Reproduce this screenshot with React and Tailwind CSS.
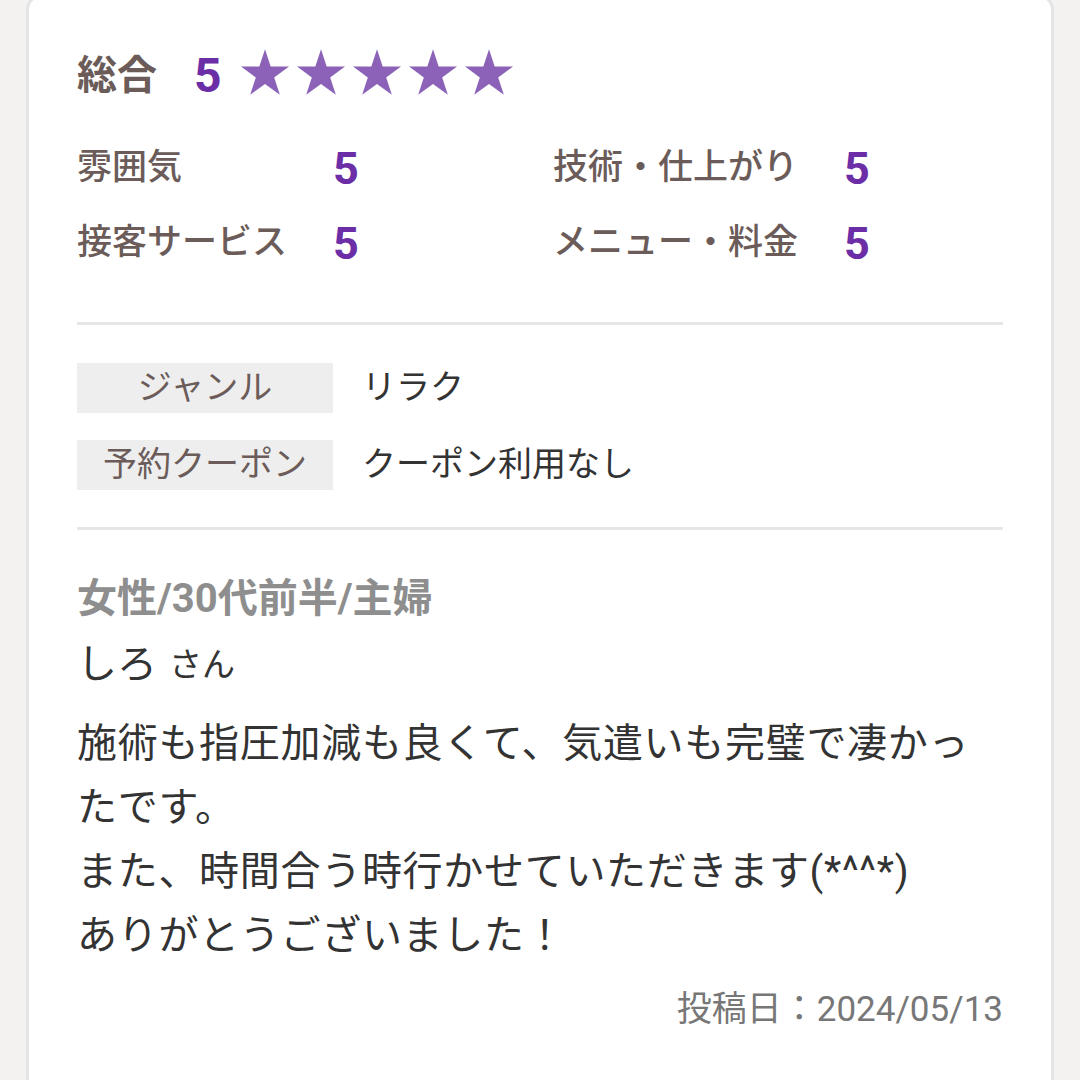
import React from "react";

const Star = () => (
  <svg viewBox="0 0 100 95" className="w-[48px] h-[46px]">
    <polygon
      fill="#8b62b8"
      points="50,0 61.8,36.3 100,36.3 69.1,58.8 80.9,95 50,72.6 19.1,95 30.9,58.8 0,36.3 38.2,36.3"
    />
  </svg>
);

const Review = () => {
  const ratings = [
    { label: "雰囲気", value: 5, w: "w-[256px]" },
    { label: "技術・仕上がり", value: 5, w: "w-[291px]" },
    { label: "接客サービス", value: 5, w: "w-[256px]" },
    { label: "メニュー・料金", value: 5, w: "w-[291px]" }
  ];

  const info = [
    { label: "ジャンル", value: "リラク" },
    { label: "予約クーポン", value: "クーポン利用なし" }
  ];

  return (
    <div className="min-h-screen bg-[#f3f2f1] px-[26px] font-[Roboto,'Noto_Sans_CJK_JP',sans-serif]">
      <div className="-mt-[6px] bg-white border-[3px] border-[#e4e4e4] rounded-[16px] px-[48px] pt-[49px] pb-[90px]">
        {/* 総合 */}
        <div className="flex items-center h-[60px]">
          <span className="text-[40px] font-bold text-[#6b5c59]">総合</span>
          <span className="ml-[37px] text-[48px] font-bold text-[#6c2ea6]">5</span>
          <div className="ml-[19px] mb-[9px] flex gap-[8px]">
            {[0, 1, 2, 3, 4].map((i) => (
              <Star key={i} />
            ))}
          </div>
        </div>

        <div className="mt-[25px] grid grid-cols-[476px_1fr]">
          {ratings.map((r, i) => (
            <div key={i} className="flex items-center h-[75px]">
              <span className={`${r.w} text-[35px] font-medium text-[#6b5c59]`}>{r.label}</span>
              <span className="text-[45px] font-bold text-[#6c2ea6]">{r.value}</span>
            </div>
          ))}
        </div>

        <div className="mt-[41px] h-[3px] bg-[#e6e6e6]" />

        <div className="mt-[37px] flex flex-col gap-[26px]">
          {info.map((row, i) => (
            <div key={i} className="flex items-center">
              <div className="w-[256px] h-[50px] bg-[#eeeeee] flex items-center justify-center text-[34px] text-[#6b5c59]">
                {row.label}
              </div>
              <div className="ml-[29px] text-[34px] text-[#333333]">{row.value}</div>
            </div>
          ))}
        </div>

        <div className="mt-[37px] h-[3px] bg-[#e6e6e6]" />

        <div className="mt-[41px] h-[56px] flex items-center text-[40px] font-bold text-[#8e8e8e]">
          女性/30代前半/主婦
        </div>
        <div className="mt-[10px] h-[56px] flex items-center text-[#333333]">
          <span className="text-[40px]">しろ</span>
          <span className="ml-[12px] text-[33px]">さん</span>
        </div>

        <p className="mt-[19px] text-[40px] leading-[64px] tracking-[0.7px] text-[#333333]">
          施術も指圧加減も良くて、気遣いも完璧で凄かったです。
          <br />
          また、時間合う時行かせていただきます(*^^*)
          <br />
          ありがとうございました！
        </p>

        <div className="mt-[17px] h-[50px] flex items-center justify-end text-[35px] text-[#777777]">
          投稿日：2024/05/13
        </div>
      </div>
    </div>
  );
};

export default Review;
